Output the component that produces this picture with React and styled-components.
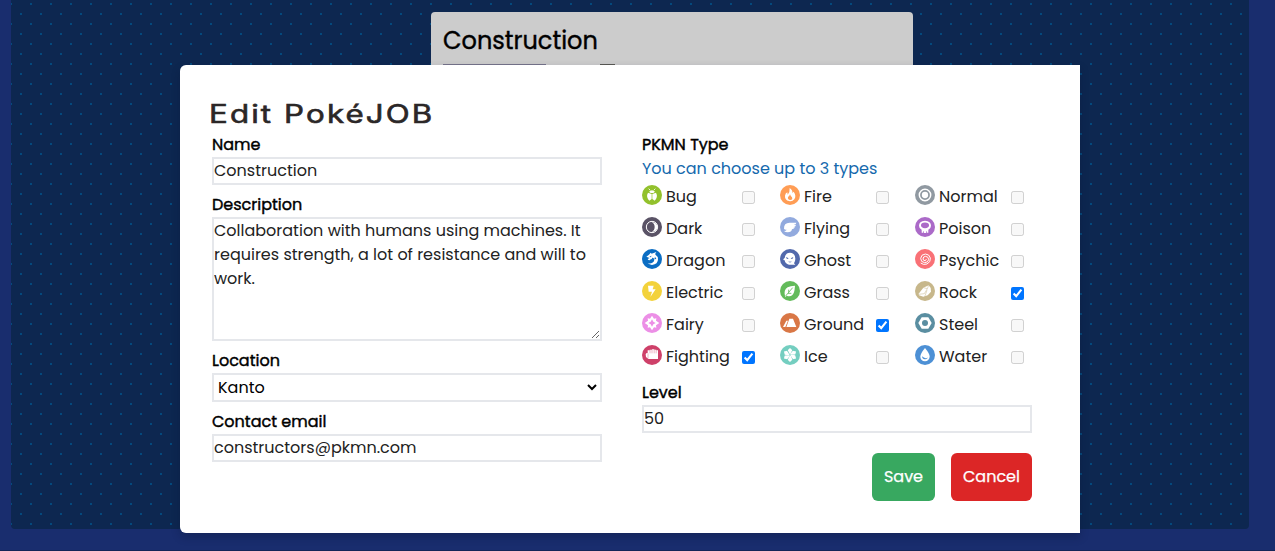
import React from "react";
import styled, { createGlobalStyle } from "styled-components";

const GlobalStyle = createGlobalStyle`
  *, *::before, *::after { box-sizing: border-box; }
  html, body { margin: 0; padding: 0; }
  body {
    background: #192d6e;
    color: #000;
    font-family: Poppins, Inter, sans-serif;
    font-size: 16px;
    line-height: 24px;
    overflow: hidden;
  }
`;

const Page = styled.div`
  position: relative;
  height: 551px;
  padding: 0 26px 0 11px;
  border-bottom: 1px solid #142657;
  overflow: hidden;
`;

const Board = styled.main`
  display: flex;
  justify-content: center;
  height: 529px;
  padding: 12px 0 0 84px;
  border-radius: 0 0 4px 4px;
  background-color: #0d2750;
  background-image:
    conic-gradient(at 2px 2px, transparent 75%, #04497c 0),
    conic-gradient(at 2px 2px, transparent 75%, #04497c 0);
  background-size: 20px 20px;
  background-position: 9px 13px, 19px 3px;
`;

const JobCard = styled.article`
  width: 482px;
  height: 200px;
  padding: 10px 12px;
  border-radius: 4px;
  background: #ccc;
`;

const JobTitle = styled.h2`
  margin: 0;
  font-size: 24px;
  line-height: 37px;
  height: 36px;
  font-weight: 400;
  -webkit-text-stroke: 0.4px #000;
`;

const JobMeta = styled.div`
  display: flex;
  gap: 54px;
  margin-top: 6px;
`;

const MetaStrip = styled.span`
  width: ${(p) => p.$width}px;
  height: 2px;
  background: ${(p) => p.$color};
`;

const Modal = styled.form`
  position: absolute;
  top: 65px;
  left: 180px;
  width: 900px;
  height: 468px;
  padding: 32px 48px 32px 32px;
  border-radius: 6px 0 0 6px;
  background: #fff;
  box-shadow: 0 4px 8px rgba(10, 20, 50, 0.3);
`;

const ModalTitle = styled.h1`
  margin: 0 0 0 -3px;
  height: 35px;
  font-family: Inter, sans-serif;
  font-size: 25px;
  line-height: 34px;
  font-weight: 400;
  letter-spacing: 1.7px;
  transform: scaleX(1.25);
  transform-origin: left;
  white-space: nowrap;
  color: #2b2727;
  -webkit-text-stroke: 0.6px #2b2727;
`;

const Columns = styled.div`
  display: grid;
  grid-template-columns: 390px 390px;
  gap: 40px;
`;

const Column = styled.div`
  display: flex;
  flex-direction: column;
`;

const Field = styled.label`
  display: flex;
  flex-direction: column;
  gap: 1px;
  margin-bottom: 7px;
`;

const Label = styled.span`
  height: 24px;
  font-weight: 400;
  line-height: 26px;
  -webkit-text-stroke: 0.4px #000;
`;

const Input = styled.input`
  width: 100%;
  height: 28px;
  padding: 0 0 2px;
  border: 2px solid #e5e7eb;
  background: #fff;
  color: #222;
  font: 400 16px/22px Poppins, Inter, sans-serif;
  outline: none;
`;

const TextArea = styled.textarea`
  display: block;
  width: 100%;
  height: 124px;
  padding: 0;
  border: 2px solid #e5e7eb;
  color: #222;
  font: 400 16px/24px Poppins, Inter, sans-serif;
  resize: both;
  overflow: auto;
  outline: none;
`;

const Select = styled.select`
  width: 100%;
  height: 29px;
  padding: 0;
  border: 2px solid #e5e7eb;
  border-radius: 0;
  background: #fff;
  color: #000;
  font: 400 16px/24px Poppins, Inter, sans-serif;
`;

const Hint = styled.p`
  margin: 0;
  height: 24px;
  line-height: 26px;
  color: #1569ad;
  font-weight: 400;
`;

const TypeGrid = styled.div`
  display: grid;
  grid-template-columns: 100px 38px 96px 39px 96px 13px;
  grid-template-rows: repeat(6, 32px);
  margin-bottom: 8px;
`;

const TypeName = styled.span`
  display: flex;
  gap: 4px;
  height: 32px;
  line-height: 34px;
  font-weight: 400;
  color: #222;
  white-space: nowrap;
`;

const TypeIcon = styled.svg`
  flex: none;
  width: 20px;
  height: 20px;
  margin-top: 5px;
`;

const TypeCheck = styled.input`
  width: 13px;
  height: 13px;
  margin: 11px 0 0;
`;

const Actions = styled.div`
  display: flex;
  justify-content: flex-end;
  gap: 16px;
  margin-top: 13px;
`;

const Button = styled.button`
  width: ${(p) => p.$width}px;
  height: 48px;
  padding: 0;
  border: 0;
  border-radius: 6px;
  background: ${(p) => p.$color};
  color: #fff;
  font: 400 16px/24px Poppins, Inter, sans-serif;
  -webkit-text-stroke: 0.25px #fff;
`;

const DISCS = {
  Bug: "#92c12c", Dark: "#5a5366", Dragon: "#0b6dc3", Electric: "#f3d23b",
  Fairy: "#ec8fe6", Fighting: "#ce4069", Fire: "#ff9d55", Flying: "#92aade",
  Ghost: "#5269ac", Grass: "#63bb5b", Ground: "#d97746", Ice: "#74cec0",
  Normal: "#9099a1", Poison: "#ab6ac8", Psychic: "#f97176", Rock: "#c7b78b",
  Steel: "#5a8ea1", Water: "#4d90d5",
};

const GLYPHS = {
  Bug: () => (
    <>
      <path d="M20 11l5 5M40 11l-5 5" stroke="#fff" strokeWidth="2.5" />
      <path d="M21 20q9-9 18 0l-5 4h-8z" />
      <path d="M18 23l11 4v15l-7 5q-11-12-4-24zM42 23l-11 4v15l7 5q11-12 4-24z" />
    </>
  ),
  Dark: () => (
    <>
      <circle cx="30" cy="30" r="17" fill="none" stroke="#fff" strokeWidth="3" />
      <path d="M29 15q17 2 17 15T29 45q9-5 9-15t-9-15z" />
    </>
  ),
  Dragon: (c) => (
    <>
      <path d="M13 23l8-6 5-6 3 3 14-5-4 7q9 6 9 15 0 15-18 17-8-1-13-6 8 3 14-1 8-4 5-12-3-5-7-2l2 4-4-1-4 4q-5 0-6-4l6-3z" />
      <path d="M22 23l7-3-3 5zM39 23l4 7-6 1z" fill={c} />
    </>
  ),
  Electric: () => <path d="M18 14h17l-3 11h9L25 48l5-16H20z" />,
  Fairy: (c) => (
    <>
      <path d="M30 8l6 9 7-1-1 7 10 7-10 7 1 7-7-1-6 9-6-9-7 1 1-7-10-7 10-7-1-7 7 1z" />
      <path d="M30 19l4 7 7 4-7 4-4 7-4-7-7-4 7-4z" fill={c} />
    </>
  ),
  Fighting: (c) => (
    <>
      <path d="M11 28q0-4 6-4v-8h6v-2h7v-1h7v1h6v2h5v26H19l-7-6z" />
      <path d="M18 25v16M24 14v11M30 14v11M36.500 14v11M42.500 15v10" stroke={c} strokeWidth="1.200" />
    </>
  ),
  Fire: (c) => (
    <>
      <path d="M29 9q10 7 8 15l4-4q9 12 2 23-7 8-16 5-13-3-12-16 1-7 7-10l1 7q7-7 6-20z" />
      <path d="M30 28q2 6 6 9 3 8-5 8-9-1-7-9 5-3 6-8z" fill={c} />
    </>
  ),
  Flying: () => (
    <path d="M12 35q-1-18 17-18h20q0 5-8 7h7q-1 5-8 7h5q-2 5-9 6-1 9-13 9-7 0-11-4 7 0 8-4-6 1-8-3z" />
  ),
  Ghost: (c) => (
    <>
      <path d="M30 11q16 1 16 18 0 8-4 14l4 4H27Q15 44 14 34l-4-1q0-4 4-6Q16 11 30 11z" />
      <path d="M18 24l8 4q-6 5-8-4zM40 24l-8 4q6 5 8-4z" fill={c} />
      <path d="M26 38q4 3 8 0" fill="none" stroke={c} strokeWidth="2" />
    </>
  ),
  Grass: (c) => (
    <>
      <path d="M15 45q-5-18 8-26 8-5 22-5-1 14-3 20-6 16-22 10l-4 5z" />
      <path d="M16 46L38 20M26 34v-8M24 37h10" fill="none" stroke={c} strokeWidth="2.500" />
    </>
  ),
  Ground: () => <path d="M28 17h11l10 25H19zM19 23h5l-8 19H9z" />,
  Ice: (c) => (
    <>
      {[0, 60, 120, 180, 240, 300].map((a) => (
        <g key={a} transform={`rotate(${a} 30 30)`}>
          <path d="M30 9l7 7-4 10-3 4-3-4-4-10z" />
          <path d="M30 30L41 11" stroke={c} strokeWidth="2" />
        </g>
      ))}
    </>
  ),
  Normal: () => (
    <>
      <circle cx="30" cy="30" r="17" fill="none" stroke="#fff" strokeWidth="4.500" />
      <circle cx="30" cy="30" r="9.500" />
    </>
  ),
  Poison: (c) => (
    <>
      <path d="M30 11q18 1 18 15 0 8-8 12v9h-5v-4h-2v5h-6v-5h-2v4h-5v-9q-8-4-8-12 0-14 18-15z" />
      <ellipse cx="30" cy="25" rx="12" ry="8.500" fill={c} />
    </>
  ),
  Psychic: () => (
    <path
      d="M17 42q8 7 19 3 12-6 10-18-3-12-15-12-13 1-14 13 0 12 12 13 10 0 12-9 0-9-9-10-8 0-8 8 1 6 7 5 4-2 2-5"
      fill="none"
      stroke="#fff"
      strokeWidth="3"
    />
  ),
  Rock: (c) => (
    <>
      <path d="M11 38l14-18 16-7 6 8 1 11-10 11-13 4-13-4z" />
      <path d="M25 20l12 3 4-10M37 23l-9 15-17 2M36 28l-7 19" fill="none" stroke={c} strokeWidth="1.500" />
    </>
  ),
  Steel: (c) => (
    <>
      <path d="M20 13h20l10 17-10 17H20L10 30z" />
      <circle cx="30" cy="30" r="9" fill={c} />
    </>
  ),
  Water: (c) => (
    <>
      <path d="M30 9q14 17 14 26-2 13-14 14-13-1-14-14 0-9 14-26z" />
      <path d="M21 34q1 10 10 9 6 0 8-6-4 4-9 2-5-1-9-5z" fill={c} />
    </>
  ),
};

const TYPES = [
  "Bug", "Fire", "Normal",
  "Dark", "Flying", "Poison",
  "Dragon", "Ghost", "Psychic",
  "Electric", "Grass", "Rock",
  "Fairy", "Ground", "Steel",
  "Fighting", "Ice", "Water",
];

const CHECKED = ["Fighting", "Ground", "Rock"];

function PokemonType({ name }) {
  const checked = CHECKED.includes(name);
  return (
    <>
      <TypeName>
        <TypeIcon viewBox="0 0 60 60" fill="#fff" aria-hidden="true">
          <circle cx="30" cy="30" r="30" fill={DISCS[name]} />
          {GLYPHS[name](DISCS[name])}
        </TypeIcon>
        {name}
      </TypeName>
      <TypeCheck type="checkbox" aria-label={name} defaultChecked={checked} disabled={!checked} />
    </>
  );
}

export default function App() {
  return (
    <>
      <GlobalStyle />
      <Page>
        <Board>
          <JobCard>
            <JobTitle>Construction</JobTitle>
            <JobMeta>
              <MetaStrip $width={103} $color="#77758a" />
              <MetaStrip $width={15} $color="#595953" />
            </JobMeta>
          </JobCard>
        </Board>
        <Modal>
          <ModalTitle>Edit PokéJOB</ModalTitle>
          <Columns>
            <Column>
              <Field>
                <Label>Name</Label>
                <Input defaultValue="Construction" />
              </Field>
              <Field>
                <Label>Description</Label>
                <TextArea defaultValue="Collaboration with humans using machines. It requires strength, a lot of resistance and will to work." />
              </Field>
              <Field>
                <Label>Location</Label>
                <Select defaultValue="Kanto">
                  <option>Kanto</option>
                </Select>
              </Field>
              <Field>
                <Label>Contact email</Label>
                <Input defaultValue="constructors@pkmn.com" />
              </Field>
            </Column>
            <Column>
              <Label>PKMN Type</Label>
              <Hint>You can choose up to 3 types</Hint>
              <TypeGrid>
                {TYPES.map((name) => (
                  <PokemonType key={name} name={name} />
                ))}
              </TypeGrid>
              <Field>
                <Label>Level</Label>
                <Input defaultValue="50" />
              </Field>
              <Actions>
                <Button type="button" $width={63} $color="#38a860">Save</Button>
                <Button type="button" $width={81} $color="#dc2626">Cancel</Button>
              </Actions>
            </Column>
          </Columns>
        </Modal>
      </Page>
    </>
  );
}
